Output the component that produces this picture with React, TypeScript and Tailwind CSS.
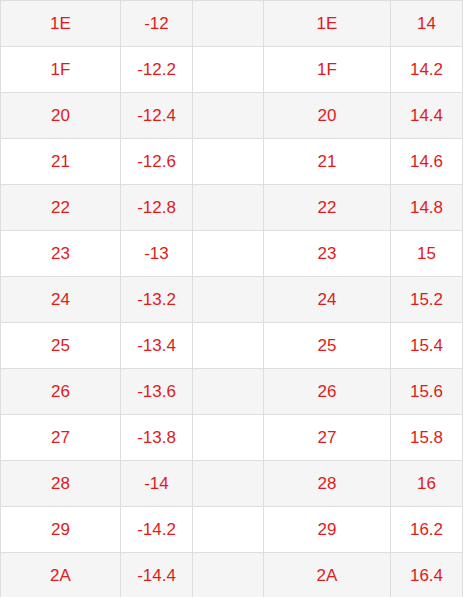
import React from 'react';

const rows: [string, string, string][] = [
  ['1E', '-12', '14'],
  ['1F', '-12.2', '14.2'],
  ['20', '-12.4', '14.4'],
  ['21', '-12.6', '14.6'],
  ['22', '-12.8', '14.8'],
  ['23', '-13', '15'],
  ['24', '-13.2', '15.2'],
  ['25', '-13.4', '15.4'],
  ['26', '-13.6', '15.6'],
  ['27', '-13.8', '15.8'],
  ['28', '-14', '16'],
  ['29', '-14.2', '16.2'],
  ['2A', '-14.4', '16.4'],
];

const cell = 'border border-[#dedede] h-[46px] p-0 text-center align-middle';

const App = () => {
  return (
    <div className="w-[463px] h-[597px] overflow-hidden bg-white" style={{ fontFamily: '"Liberation Sans", Arial, sans-serif' }}>
      <table className="border-collapse table-fixed w-[462px] text-[17px] text-[#e01b1b]">
        <colgroup>
          <col className="w-[120px]" />
          <col className="w-[72px]" />
          <col className="w-[71px]" />
          <col className="w-[127px]" />
          <col className="w-[72px]" />
        </colgroup>
        <tbody>
          {rows.map(([hex, neg, pos], i) => (
            <tr key={hex} className={i % 2 === 0 ? 'bg-[#f5f5f5]' : 'bg-white'}>
              <td className={cell}>{hex}</td>
              <td className={cell}>{neg}</td>
              <td className={cell}></td>
              <td className={cell}>{hex}</td>
              <td className={cell}>{pos}</td>
            </tr>
          ))}
        </tbody>
      </table>
    </div>
  );
};

export default App;
